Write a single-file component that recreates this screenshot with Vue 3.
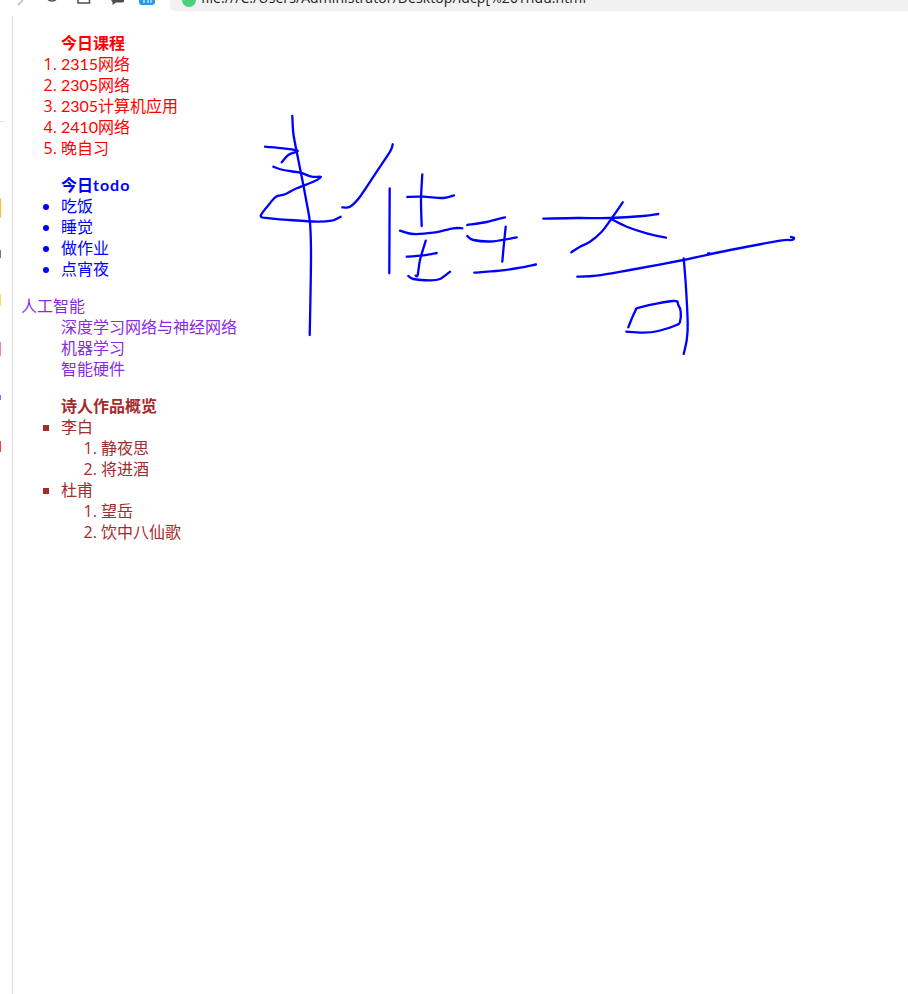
<script setup>
const strokes = [
  [[292.3,116],[293.3,133],[296.7,151.7],[301.7,176.7],[306.7,203],[310,223],[311,250],[310.7,283],[309.7,335]],
  [[265,146.7],[283.3,148.3],[297.7,150.7],[288.3,155],[281.7,162.3]],
  [[273.3,166.7],[283.3,170],[300,172.7],[311.7,176.7],[321,177],[313.3,181.7],[296.7,188.3],[285,194.3],[276,196.7],[270,203.3],[260.7,216],[270,218.3],[290,220],[316.7,221.7],[331.7,220.7],[340.7,216.7]],
  [[342.3,207.3],[350,206.7],[360,196.7],[376.7,171.7],[390,151.7],[392.7,144.3]],
  [[389.7,188.3],[389.3,273.3]],
  [[422.3,174.3],[421,200],[421.7,226]],
  [[407.3,197],[423.3,196.7],[443.3,198],[454,195.3]],
  [[400,230.7],[413.3,234],[433.3,232.7],[453.3,228.3],[462.3,228.3]],
  [[425.7,240.7],[420,260],[417.7,275],[415.7,275.7]],
  [[406.7,256.7],[423.3,255.3],[436.7,253]],
  [[408.3,276],[413.3,279],[430,280.3],[440,279],[450,271.7]],
  [[467.3,225],[486.7,222],[505,217.3]],
  [[467.3,236],[473.3,240],[493.3,241.3],[516.7,237.3]],
  [[505.7,226.7],[504,243.3],[502.3,261.7]],
  [[474.3,272.7],[500,270.7],[520,267.7],[536,264.5]],
  [[543.3,218.7],[576.7,218],[610,218],[643.3,216],[658.3,214]],
  [[622.7,202.3],[611.7,218.3],[601.7,231.7],[590,241.7],[580,246.7],[571.3,252.3]],
  [[611,219],[626.7,226.7],[646.7,233.3],[666,237.7]],
  [[577.3,276.7],[596.7,275.7],[630,270],[683.3,260],[730,250],[780,240.7],[791.7,240],[794,237.7],[791,237]],
  [[708,253.5],[710,253.5]],
  [[683.7,258.3],[685.7,283.3],[687.7,323.3],[686.7,340],[683.7,354]],
  [[628.3,327.3],[635,311.7],[640,307.3],[673.3,301],[678.3,305],[680.7,311.7],[680,321.7],[676.7,325],[658.3,331],[643.3,332.7],[626.3,331.7]]
]

// Catmull-Rom through the sampled points, so the ink reads as a pen line
const toPath = (p) => {
  let d = `M${p[0][0]} ${p[0][1]}`
  for (let i = 0; i < p.length - 1; i++) {
    const a = p[i - 1] || p[i]
    const b = p[i]
    const c = p[i + 1]
    const e = p[i + 2] || c
    const c1x = (b[0] + (c[0] - a[0]) / 6).toFixed(1)
    const c1y = (b[1] + (c[1] - a[1]) / 6).toFixed(1)
    const c2x = (c[0] - (e[0] - b[0]) / 6).toFixed(1)
    const c2y = (c[1] - (e[1] - b[1]) / 6).toFixed(1)
    d += ` C${c1x} ${c1y} ${c2x} ${c2y} ${c[0]} ${c[1]}`
  }
  return d
}
const paths = strokes.map(toPath)
</script>

<template>
  <div class="page">
    <header class="chrome">
      <svg class="tools" width="160" height="16" viewBox="0 0 160 16">
        <path d="M18 5 L23 0" fill="none" stroke="#bdbdbd" stroke-width="1.6" />
        <path d="M46.5 -3 A5.8 5.8 0 0 0 57.5 -3" fill="none" stroke="#4d4d4d" stroke-width="1.5" />
        <path d="M78 -4 V3 H89.5 V-4" fill="none" stroke="#4d4d4d" stroke-width="1.5" />
        <path d="M111 0 H124 V1.5 Q124 2.5 122 2.5 H116 L112.5 5 V2 Z" fill="#4d4d4d" />
        <path d="M139 -4 H155 V2 Q155 5 152 5 H142 Q139 5 139 2 Z" fill="#1f9cf0" />
        <path d="M144 0 V3 M148 0 V3 M151 0 V3" stroke="#fff" stroke-width="1" />
      </svg>
      <div class="address">
        <span class="secure"></span>
        <span class="url">file:///C:/Users/Administrator/Desktop/ldcp[%20Tndu.html</span>
      </div>
    </header>

    <div class="body">
      <aside class="rail">
        <i class="rule"></i>
        <i class="mark orange"></i>
        <i class="mark gray"></i>
        <i class="mark yellow"></i>
        <i class="mark pink"></i>
        <i class="mark blue"></i>
        <i class="mark red"></i>
      </aside>

      <main class="doc">
        <section class="list red-text">
          <div class="caption">今日课程</div>
          <ol>
            <li>2315网络</li>
            <li>2305网络</li>
            <li>2305计算机应用</li>
            <li>2410网络</li>
            <li>晚自习</li>
          </ol>
        </section>

        <section class="list blue-text">
          <div class="caption">今日<span class="latin">todo</span></div>
          <ul>
            <li>吃饭</li>
            <li>睡觉</li>
            <li>做作业</li>
            <li>点宵夜</li>
          </ul>
        </section>

        <dl class="violet-text">
          <dt>人工智能</dt>
          <dd>深度学习网络与神经网络</dd>
          <dd>机器学习</dd>
          <dd>智能硬件</dd>
        </dl>

        <section class="list brown-text">
          <div class="caption">诗人作品概览</div>
          <ul class="square">
            <li>李白
              <ol>
                <li>静夜思</li>
                <li>将进酒</li>
              </ol>
            </li>
            <li>杜甫
              <ol>
                <li>望岳</li>
                <li>饮中八仙歌</li>
              </ol>
            </li>
          </ul>
        </section>
      </main>
    </div>

    <svg class="ink" width="908" height="994" viewBox="0 0 908 994">
      <path v-for="(d, i) in paths" :key="i" :d="d" />
    </svg>
  </div>
</template>

<style scoped>
.page {
  position: relative;
  width: 908px;
  height: 994px;
  overflow: hidden;
  background: #fff;
  font-family: Lato, "Noto Sans CJK SC", sans-serif;
  font-size: 16px;
  line-height: 21px;
}
.chrome {
  position: relative;
  height: 16px;
  overflow: hidden;
}
.tools {
  position: absolute;
  left: 0;
  top: 0;
}
.address {
  position: absolute;
  left: 170px;
  right: 0;
  top: 0;
  height: 11px;
  overflow: hidden;
  background: #f1f1f1;
  border-bottom-left-radius: 5px;
}
.secure {
  position: absolute;
  left: 12px;
  top: -7px;
  width: 14px;
  height: 14px;
  border-radius: 50%;
  background: #4cd07d;
}
.url {
  position: absolute;
  left: 31px;
  top: -12px;
  font-family: "Open Sans", "Liberation Sans", sans-serif;
  font-size: 14px;
  letter-spacing: 0.09px;
  line-height: 20px;
  white-space: nowrap;
  color: #222;
}
.body {
  display: flex;
  height: 978px;
}
.rail {
  position: relative;
  flex: none;
  width: 12px;
  border-right: 1px solid #dedede;
}
.rule {
  position: absolute;
  left: 0;
  top: 105px;
  width: 5px;
  height: 1px;
  background: #e6e6e6;
}
.mark {
  position: absolute;
  left: 0;
  width: 1px;
}
.orange { top: 182px; height: 20px; background: #fbbb3c; }
.gray { top: 234px; height: 8px; background: #777; }
.yellow { top: 278px; height: 12px; background: #fcdc5c; }
.pink { top: 326px; height: 14px; background: #ee80d0; }
.blue { top: 379px; height: 5px; background: #6a7cf0; }
.red { top: 425px; height: 11px; background: #ee4040; }
.doc {
  flex: 1;
  padding: 16px 8px 0;
}
.list,
dl {
  margin: 0 0 16px;
}
.caption {
  padding-left: 40px;
  font-weight: 700;
}
.latin {
  letter-spacing: 1px;
}
ol,
ul {
  margin: 0;
  padding-left: 40px;
}
li::marker {
  font-family: "Open Sans", sans-serif;
}
.square {
  list-style: square;
}
dd {
  margin-left: 40px;
}
.red-text { color: #f00; }
.blue-text { color: #00f; }
.violet-text { color: #8a2be2; }
.brown-text { color: #a52a2a; }
.ink {
  position: absolute;
  left: 0;
  top: 0;
  pointer-events: none;
}
.ink path {
  fill: none;
  stroke: #00f;
  stroke-width: 2.3;
  stroke-linecap: round;
  stroke-linejoin: round;
}
</style>
